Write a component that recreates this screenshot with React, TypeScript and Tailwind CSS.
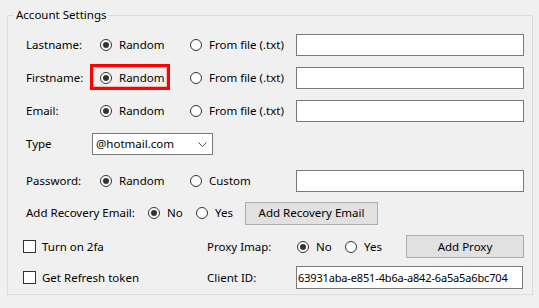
import React from "react";

function Radio({ checked, label, className = "" }: { checked?: boolean; label: string; className?: string }) {
  return (
    <div className={`flex items-center ${className}`}>
      <span className="w-[12px] h-[12px] rounded-full border border-[#333333] bg-white flex items-center justify-center shrink-0">
        {checked && <span className="w-[6px] h-[6px] rounded-full bg-[#333333]" />}
      </span>
      <span className="ml-[7px] whitespace-nowrap">{label}</span>
    </div>
  );
}

function TextBox({ className = "", children }: { className?: string; children?: React.ReactNode }) {
  return (
    <div className={`border border-[#7a7a7a] bg-white flex items-center ${className}`}>{children}</div>
  );
}

function Checkbox({ label }: { label: string }) {
  return (
    <div className="flex items-center w-[199px] pl-[15px]">
      <span className="w-[13px] h-[13px] border border-[#333333] bg-white shrink-0" />
      <span className="ml-[6px] whitespace-nowrap">{label}</span>
    </div>
  );
}

function Button({ label, className = "" }: { label: string; className?: string }) {
  return (
    <div className={`border border-[#adadad] bg-[#e1e1e1] flex items-center justify-center whitespace-nowrap ${className}`}>
      {label}
    </div>
  );
}

function ChoiceRow({
  label,
  second,
  className = "",
  highlight,
}: {
  label: string;
  second: string;
  className?: string;
  highlight?: boolean;
}) {
  return (
    <div className={`relative flex items-center h-[22px] pl-[18px] ${className}`}>
      <div className="w-[74px] whitespace-nowrap">{label}</div>
      <Radio checked label="Random" className="w-[90px]" />
      <Radio label={second} className="w-[106px]" />
      <TextBox className="w-[228px] h-[22px]" />
      {highlight && (
        <div className="absolute left-[82px] top-[-3px] w-[80px] h-[26px] border-[3px] border-[#ff0000] shadow-[inset_0_0_0_1px_#f7b5b5]" />
      )}
    </div>
  );
}

export default function App() {
  return (
    <div className="w-[539px] h-[308px] bg-[#f0f0f0] pt-[7px] px-[7px] font-['Noto_Sans',sans-serif] text-[11.5px] leading-[16px] text-black">
      <fieldset className="border border-[#dcdcdc] w-[526px] h-[288px]">
        <legend className="ml-[6px] px-[2px] leading-[16px]">Account Settings</legend>
        <div className="pt-[11px]">
          <ChoiceRow label="Lastname:" second="From file (.txt)" />
          <ChoiceRow label="Firstname:" second="From file (.txt)" className="mt-[11px]" highlight />
          <ChoiceRow label="Email:" second="From file (.txt)" className="mt-[11px]" />

          <div className="flex items-center h-[22px] pl-[18px] mt-[11px]">
            <div className="w-[66px]">Type</div>
            <div className="w-[121px] h-[22px] border border-[#7a7a7a] bg-white flex items-center justify-between pl-[3px] pr-[5px]">
              <span>@hotmail.com</span>
              <svg width="9" height="5" viewBox="0 0 9 5" className="shrink-0">
                <polyline points="0.5,0.5 4.5,4.5 8.5,0.5" fill="none" stroke="#555555" strokeWidth="1" />
              </svg>
            </div>
          </div>

          <div className="flex items-center h-[22px] pl-[18px] mt-[15px]">
            <div className="w-[74px] whitespace-nowrap">Password:</div>
            <Radio checked label="Random" className="w-[90px]" />
            <Radio label="Custom" className="w-[106px]" />
            <TextBox className="w-[228px] h-[22px]" />
          </div>

          <div className="flex items-center h-[22px] pl-[18px] mt-[10px]">
            <div className="w-[122px] whitespace-nowrap">Add Recovery Email:</div>
            <Radio checked label="No" className="w-[48px]" />
            <Radio label="Yes" className="w-[49px]" />
            <Button label="Add Recovery Email" className="w-[133px] h-[23px]" />
          </div>

          <div className="flex items-center h-[23px] mt-[11px]">
            <Checkbox label="Turn on 2fa" />
            <div className="w-[90px] whitespace-nowrap">Proxy Imap:</div>
            <Radio checked label="No" className="w-[48px]" />
            <Radio label="Yes" className="w-[61px]" />
            <Button label="Add Proxy" className="w-[118px] h-[23px]" />
          </div>

          <div className="flex items-center h-[23px] mt-[8px]">
            <Checkbox label="Get Refresh token" />
            <div className="w-[89px] whitespace-nowrap">Client ID:</div>
            <TextBox className="w-[227px] h-[23px] pl-[1px]">
              <span className="whitespace-nowrap text-[11px] tracking-[-0.15px]">63931aba-e851-4b6a-a842-6a5a5a6bc704</span>
            </TextBox>
          </div>
        </div>
      </fieldset>
    </div>
  );
}
